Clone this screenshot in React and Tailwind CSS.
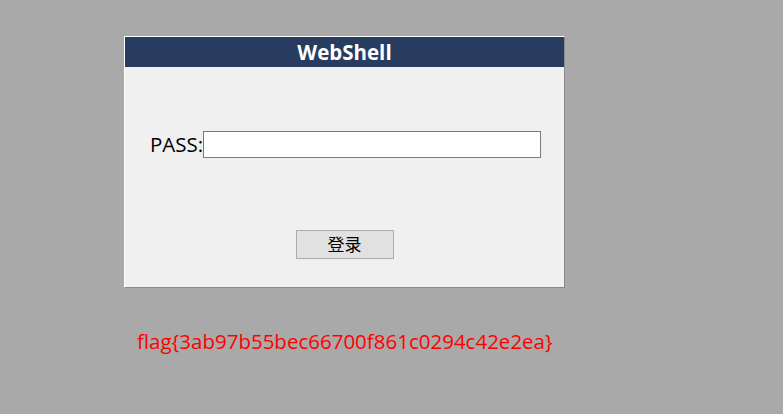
import React from "react";

export default function App() {
  return (
    <div className="w-[783px] h-[414px] bg-[#a9a9a9] pt-[36px] pl-[124px] font-['Open_Sans','Noto_Sans_CJK_SC',sans-serif] overflow-hidden">
      <div className="w-[441px] h-[252px] bg-[#f0f0f0] border-t border-l border-t-white border-l-white border-r border-b border-r-[#888] border-b-[#888] flex flex-col">
        <div className="h-[30px] bg-[#273c5e] flex items-center justify-center">
          <h1 className="text-white font-bold text-[20.5px] leading-none">WebShell</h1>
        </div>
        <div className="flex items-center pl-[25px] mt-[64px]">
          <label className="w-[53px] text-[20.5px] text-black leading-none">PASS:</label>
          <input type="password" className="w-[338px] h-[27px] bg-white border border-[#7a7a7a] outline-none" />
        </div>
        <div className="flex justify-center mt-[72px]">
          <button className="w-[98px] h-[29px] bg-[#e1e1e1] border border-[#adadad] text-[17px] text-black leading-none">登录</button>
        </div>
      </div>
      <p className="mt-[43px] ml-[13px] text-[20.5px] text-[#ff0000] leading-none">flag{"{"}3ab97b55bec66700f861c0294c42e2ea{"}"}</p>
    </div>
  );
}
